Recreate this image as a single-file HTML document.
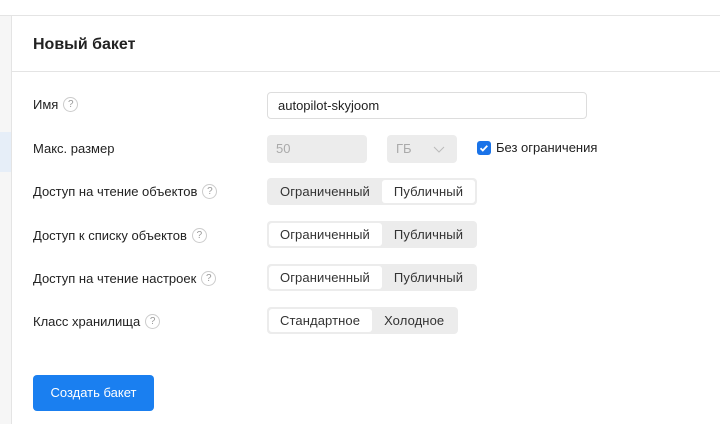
<!DOCTYPE html><html><head><meta charset="utf-8"><style>
*{box-sizing:border-box;margin:0;padding:0}
body{width:720px;height:424px;overflow:hidden;background:#fff;font-family:"Liberation Sans",sans-serif;color:#222;font-size:13px;position:relative}
.a{position:absolute}
.lbl{position:absolute;left:33px;font-size:13px;color:#222;display:flex;align-items:center;height:20px}
.q{display:inline-block;width:15px;height:15px;border:1px solid #ccc;border-radius:50%;font-size:10px;color:#999;text-align:center;line-height:13px;margin-left:5px}
.seg{position:absolute;left:267px;height:27px;background:#ececec;border-radius:4px;display:flex;padding:2px}
.seg div{padding:0 12px 0 11px;line-height:23px;font-size:13px;color:#333;border-radius:3px;letter-spacing:0.1px}
.seg div+div{padding:0 12px 0 12px}
.seg .on{background:#fff}
</style></head><body>
<div class="a" style="left:0;top:15px;width:720px;height:1px;background:#e4e4e4"></div>
<div class="a" style="left:0;top:16px;width:11px;height:408px;background:#f6f6f6"></div>
<div class="a" style="left:0;top:132px;width:11px;height:40px;background:#e6eef8"></div>
<div class="a" style="left:11px;top:16px;width:1px;height:408px;background:#e4e4e4"></div>
<div class="a" style="left:33px;top:36px;font-size:16px;font-weight:bold;color:#222">Новый бакет</div>
<div class="a" style="left:12px;top:71px;width:708px;height:1px;background:#e4e4e4"></div>
<div class="lbl" style="top:94px">Имя<span class="q">?</span></div>
<div class="a" style="left:267px;top:92px;width:320px;height:27px;border:1px solid #ddd;border-radius:4px;padding-left:10px;line-height:25px;font-size:13px">autopilot-skyjoom</div>
<div class="lbl" style="top:138px">Макс. размер</div>
<div class="a" style="left:267px;top:135px;width:100px;height:28px;background:#ececec;border-radius:4px;padding-left:9px;line-height:28px;color:#aaa">50</div>
<div class="a" style="left:387px;top:135px;width:70px;height:28px;background:#ececec;border-radius:4px;padding-left:9px;line-height:28px;color:#aaa">ГБ<svg style="position:absolute;left:46px;top:11px" width="12" height="7"><path d="M1 1l5 5 5-5" stroke="#bbb" fill="none"/></svg></div>
<div class="a" style="left:477px;top:141px;width:14px;height:14px;background:#1a73e8;border-radius:3px"><svg width="14" height="14"><path d="M3.5 7.2l2.3 2.3 4.5-4.8" stroke="#fff" stroke-width="1.8" fill="none"/></svg></div>
<div class="a" style="left:496px;top:140px;font-size:13px">Без ограничения</div>
<div class="lbl" style="top:181px">Доступ на чтение объектов<span class="q">?</span></div>
<div class="seg" style="top:178px"><div>Ограниченный</div><div class="on">Публичный</div></div>
<div class="lbl" style="top:225px">Доступ к списку объектов<span class="q">?</span></div>
<div class="seg" style="top:221px"><div class="on">Ограниченный</div><div>Публичный</div></div>
<div class="lbl" style="top:268px">Доступ на чтение настроек<span class="q">?</span></div>
<div class="seg" style="top:264px"><div class="on">Ограниченный</div><div>Публичный</div></div>
<div class="lbl" style="top:311px">Класс хранилища<span class="q">?</span></div>
<div class="seg" style="top:307px"><div class="on">Стандартное</div><div>Холодное</div></div>
<div class="a" style="left:33px;top:375px;width:121px;height:36px;background:#1a7ff0;border-radius:4px;color:#fff;text-align:center;line-height:36px;font-size:13px">Создать бакет</div>
</body></html>
